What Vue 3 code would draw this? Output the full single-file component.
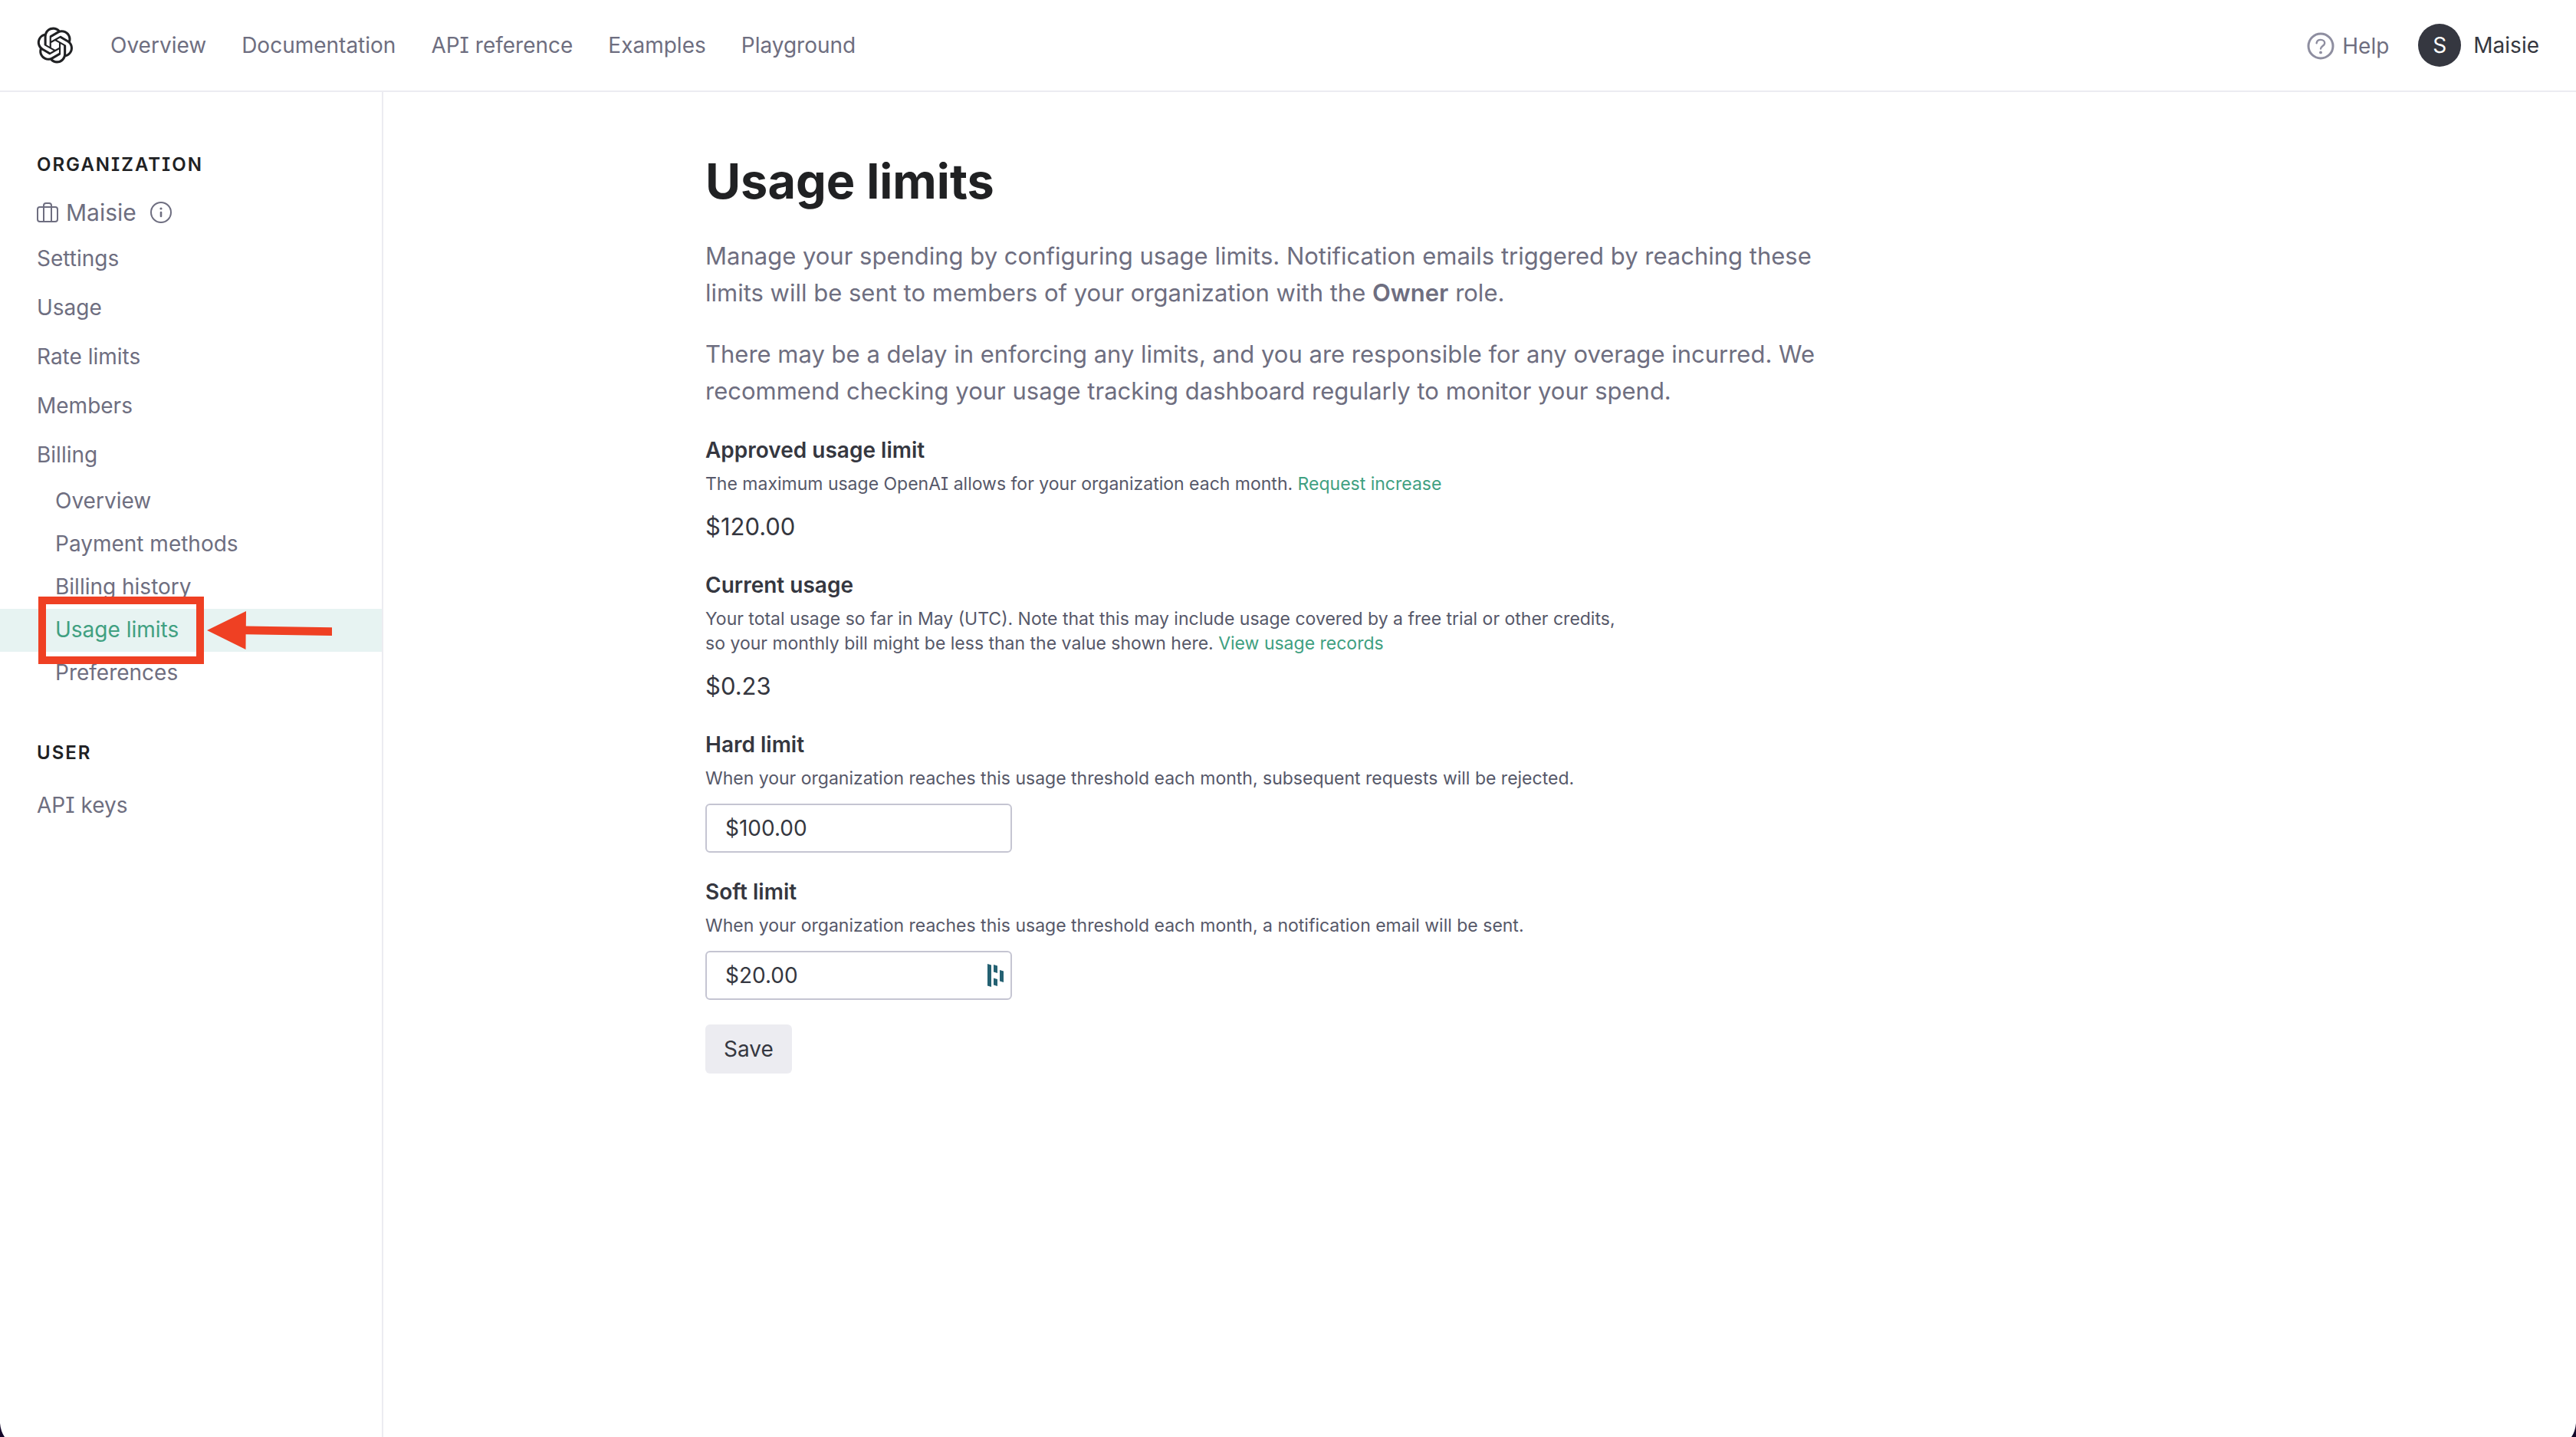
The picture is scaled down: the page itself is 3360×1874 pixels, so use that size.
<script setup>
import { ref } from 'vue'

const topLinks = ['Overview', 'Documentation', 'API reference', 'Examples', 'Playground']
const orgLinks = ['Settings', 'Usage', 'Rate limits', 'Members', 'Billing']
const billingLinks = ['Overview', 'Payment methods', 'Billing history', 'Usage limits', 'Preferences']
const activeLink = 'Usage limits'

const hardLimit = ref('$100.00')
const softLimit = ref('$20.00')
</script>

<template>
  <div class="page">
    <header class="topbar">
      <a class="logo" href="#" aria-label="OpenAI">
        <svg viewBox="0 0 41 41" width="48" height="48" fill="currentColor" aria-hidden="true">
          <path d="M37.5324 16.8707C37.9808 15.5241 38.1363 14.0974 37.9886 12.6859C37.8409 11.2744 37.3934 9.91076 36.676 8.68622C35.6126 6.83404 33.9882 5.3676 32.0373 4.4985C30.0864 3.62941 27.9098 3.40259 25.8215 3.85078C24.8796 2.7893 23.7219 1.94125 22.4257 1.36341C21.1295 0.785575 19.7249 0.491269 18.3058 0.500197C16.1708 0.495044 14.0893 1.16803 12.3614 2.42214C10.6335 3.67624 9.34853 5.44666 8.6917 7.47815C7.30085 7.76286 5.98686 8.3414 4.8377 9.17505C3.68854 10.0087 2.73073 11.0782 2.02839 12.312C0.956464 14.1591 0.498905 16.2988 0.721698 18.4228C0.944492 20.5467 1.83612 22.5449 3.268 24.1293C2.81966 25.4759 2.66413 26.9026 2.81182 28.3141C2.95951 29.7256 3.40701 31.0892 4.12437 32.3138C5.18791 34.1659 6.8123 35.6322 8.76321 36.5013C10.7141 37.3704 12.8907 37.5973 14.9789 37.1492C15.9208 38.2107 17.0786 39.0587 18.3747 39.6366C19.6709 40.2144 21.0755 40.5087 22.4946 40.4998C24.6307 40.5054 26.7133 39.8321 28.4418 38.5772C30.1704 37.3223 31.4556 35.5506 32.1119 33.5179C33.5027 33.2332 34.8167 32.6547 35.9659 31.821C37.115 30.9874 38.0728 29.9178 38.7752 28.684C39.8458 26.8371 40.3023 24.6979 40.0789 22.5748C39.8556 20.4517 38.9639 18.4544 37.5324 16.8707ZM22.4978 37.8849C20.7443 37.8874 19.0459 37.2733 17.6994 36.1501C17.7601 36.117 17.8666 36.0586 17.936 36.0161L25.9004 31.4156C26.1003 31.3019 26.2663 31.137 26.3813 30.9378C26.4964 30.7386 26.5563 30.5124 26.5549 30.2825V19.0542L29.9213 20.998C29.9389 21.0068 29.9541 21.0198 29.9656 21.0359C29.977 21.052 29.9842 21.0707 29.9867 21.0902V30.3889C29.9842 32.375 29.1946 34.2791 27.7909 35.6841C26.3872 37.0892 24.4838 37.8806 22.4978 37.8849ZM6.39227 31.0064C5.51397 29.4888 5.19742 27.7107 5.49804 25.9832C5.55718 26.0187 5.66048 26.0818 5.73461 26.1244L13.699 30.7248C13.8975 30.8408 14.1233 30.902 14.3532 30.902C14.583 30.902 14.8088 30.8408 15.0073 30.7248L24.731 25.1103V28.9979C24.7321 29.0177 24.7283 29.0376 24.7199 29.0556C24.7115 29.0736 24.6988 29.0893 24.6829 29.1012L16.6317 33.7497C14.9096 34.7416 12.8643 35.0097 10.9447 34.4954C9.02506 33.9811 7.38785 32.7263 6.39227 31.0064ZM4.29707 13.6194C5.17156 12.0998 6.55279 10.9364 8.19885 10.3327C8.19885 10.4013 8.19491 10.5228 8.19491 10.6071V19.808C8.19351 20.0378 8.25334 20.2638 8.36823 20.4629C8.48312 20.6619 8.64893 20.8267 8.84863 20.9404L18.5723 26.5542L15.206 28.4979C15.1894 28.5089 15.1703 28.5155 15.1505 28.5173C15.1307 28.5191 15.1107 28.516 15.0924 28.5082L7.04046 23.8557C5.32135 22.8601 4.06716 21.2235 3.55289 19.3046C3.03862 17.3858 3.30624 15.3413 4.29707 13.6194ZM31.955 20.0556L22.2312 14.4411L25.5976 12.4981C25.6142 12.4872 25.6333 12.4805 25.6531 12.4787C25.6729 12.4769 25.6928 12.4801 25.7111 12.4879L33.7631 17.1364C34.9967 17.849 36.0017 18.8982 36.6606 20.1613C37.3194 21.4244 37.6047 22.849 37.4832 24.2684C37.3617 25.6878 36.8382 27.0432 35.9743 28.1759C35.1103 29.3086 33.9415 30.1717 32.6047 30.6641C32.6047 30.5947 32.6047 30.4733 32.6047 30.3889V21.188C32.6066 20.9586 32.5474 20.7328 32.4332 20.5338C32.319 20.3348 32.154 20.1698 31.955 20.0556ZM35.3055 15.0128C35.2464 14.9765 35.1431 14.9142 35.069 14.8717L27.1045 10.2712C26.906 10.1554 26.6803 10.0943 26.4504 10.0943C26.2206 10.0943 25.9948 10.1554 25.7963 10.2712L16.0726 15.8858V11.9982C16.0715 11.9783 16.0753 11.9585 16.0837 11.9405C16.0921 11.9225 16.1048 11.9068 16.1207 11.8949L24.1719 7.25025C25.4053 6.53903 26.8158 6.19376 28.2383 6.25482C29.6608 6.31589 31.0364 6.78077 32.2044 7.59508C33.3723 8.40939 34.2842 9.53945 34.8334 10.8531C35.3826 12.1667 35.5464 13.6095 35.3055 15.0128ZM14.2424 21.9419L10.8752 19.9981C10.8576 19.9893 10.8423 19.9763 10.8309 19.9602C10.8195 19.9441 10.8122 19.9254 10.8098 19.9058V10.6071C10.8107 9.18295 11.2173 7.78848 11.9819 6.58696C12.7466 5.38544 13.8377 4.42659 15.1275 3.82264C16.4173 3.21869 17.8524 2.99464 19.2649 3.1767C20.6775 3.35876 22.0089 3.93941 23.1034 4.85067C23.0427 4.88379 22.937 4.94215 22.8668 4.98473L14.9024 9.58517C14.7025 9.69878 14.5366 9.86356 14.4215 10.0626C14.3065 10.2616 14.2466 10.4877 14.2479 10.7175L14.2424 21.9419ZM16.071 17.9991L20.4018 15.4978L24.7325 17.9975V22.9985L20.4018 25.4983L16.071 22.9985V17.9991Z" />
        </svg>
      </a>
      <nav class="topnav" aria-label="Main">
        <a v-for="link in topLinks" :key="link" href="#">{{ link }}</a>
      </nav>
      <div class="account">
        <a class="help" href="#">
          <svg class="help-icon" viewBox="0 0 36 36" width="36" height="36" fill="none" stroke="currentColor" stroke-width="3" stroke-linecap="round" aria-hidden="true">
            <circle cx="18" cy="18" r="16" />
            <path d="M12.6 14.2C13 11.600 15.200 9.900 18 9.900C21 9.900 23.200 11.700 23.200 14.300C23.200 17.900 18 18.200 18 21.600" stroke-width="2.400" />
            <circle cx="18" cy="26.400" r="1.900" fill="currentColor" stroke="none" />
          </svg>
          Help
        </a>
        <button class="profile" type="button">
          <span class="avatar">S</span>
          Maisie
        </button>
      </div>
    </header>

    <div class="body">
      <aside class="sidebar">
        <h2 class="side-title">ORGANIZATION</h2>
        <div class="org">
          <svg viewBox="0 0 28 26" width="28" height="26" fill="none" stroke="currentColor" stroke-width="2" stroke-linejoin="round" aria-hidden="true">
            <rect x="1" y="6" width="26" height="19" rx="3" />
            <path d="M9 25V4a3 3 0 0 1 3-3h4a3 3 0 0 1 3 3v21" />
          </svg>
          <span class="org-name">Maisie</span>
          <svg class="info" viewBox="0 0 28 28" width="28" height="28" fill="none" stroke="currentColor" stroke-width="2" aria-hidden="true">
            <circle cx="14" cy="14" r="13" />
            <path d="M14 14v5" stroke-width="2.600" stroke-linecap="round" />
            <circle cx="14" cy="9" r="1.600" fill="currentColor" stroke="none" />
          </svg>
        </div>
        <nav aria-label="Organization">
          <a v-for="link in orgLinks" :key="link" class="side-link" href="#">{{ link }}</a>
          <div class="sub-links">
            <a
              v-for="link in billingLinks"
              :key="link"
              class="sub-link"
              :class="{ active: link === activeLink }"
              href="#"
            >
              {{ link }}
              <template v-if="link === activeLink">
                <span class="callout-box"></span>
                <svg class="callout-arrow" viewBox="0 0 164 50" width="164" height="50" aria-hidden="true">
                  <path d="M0 25L51 0L50.800 19.500L163 21.300V32L50.600 30.300L50.500 50Z" fill="#ef4023" />
                </svg>
              </template>
            </a>
          </div>
        </nav>
        <h2 class="side-title user-title">USER</h2>
        <nav aria-label="User">
          <a class="side-link" href="#">API keys</a>
        </nav>
      </aside>

      <main class="main">
        <div class="content">
          <h1>Usage limits</h1>
          <div class="intro">
            <p>
              Manage your spending by configuring usage limits. Notification emails triggered by reaching these
              limits will be sent to members of your organization with the <strong>Owner</strong> role.
            </p>
            <p>
              There may be a delay in enforcing any limits, and you are responsible for any overage incurred. We
              recommend checking your usage tracking dashboard regularly to monitor your spend.
            </p>
          </div>

          <section class="stat">
            <h3 class="label">Approved usage limit</h3>
            <p class="hint">
              The maximum usage OpenAI allows for your organization each month.
              <a href="#">Request increase</a>
            </p>
            <p class="value">$120.00</p>
          </section>

          <section class="stat">
            <h3 class="label">Current usage</h3>
            <p class="hint">
              Your total usage so far in May (UTC). Note that this may include usage covered by a free trial or other credits,<br />
              so your monthly bill might be less than the value shown here.
              <a href="#">View usage records</a>
            </p>
            <p class="value">$0.23</p>
          </section>

          <form @submit.prevent>
            <div class="field">
              <label class="label" for="hard-limit">Hard limit</label>
              <p id="hard-hint" class="hint">
                When your organization reaches this usage threshold each month, subsequent requests will be rejected.
              </p>
              <div class="input-wrap">
                <input id="hard-limit" v-model="hardLimit" type="text" aria-describedby="hard-hint" />
              </div>
            </div>
            <div class="field">
              <label class="label" for="soft-limit">Soft limit</label>
              <p id="soft-hint" class="hint">
                When your organization reaches this usage threshold each month, a notification email will be sent.
              </p>
              <div class="input-wrap">
                <input id="soft-limit" v-model="softLimit" type="text" aria-describedby="soft-hint" />
                <svg class="autofill" viewBox="0 0 22 30" width="22" height="30" fill="#246172" aria-hidden="true">
                  <path d="M0 0L5 1.500V30L0 28.500ZM8 1L13 2.500V12L8 10.500ZM8 18.500L13 20V29L8 27.500ZM16 8L21 9.500V24L16 22.500Z" />
                </svg>
              </div>
            </div>
            <button class="save" type="submit">Save</button>
          </form>
        </div>
      </main>
    </div>

    <svg class="corner left" viewBox="0 0 6 18" width="6" height="18" aria-hidden="true">
      <path d="M0 0Q1 11 6 18H0Z" fill="#14082a" />
    </svg>
    <svg class="corner right" viewBox="0 0 6 18" width="6" height="18" aria-hidden="true">
      <path d="M6 0Q5 11 0 18H6Z" fill="#14082a" />
    </svg>
  </div>
</template>

<style>
body {
  margin: 0;
  background: #fff;
}
</style>

<style scoped>
/* cv08 gives Inter's capital I its serifs */
.page {
  display: flex;
  flex-direction: column;
  min-height: 100vh;
  font-family: Inter, "Liberation Sans", sans-serif;
  font-feature-settings: "cv08";
  font-size: 28px;
  color: #353740;
}

a {
  color: inherit;
  text-decoration: none;
}

h1,
h2,
h3,
p {
  margin: 0;
}

input,
button {
  box-sizing: border-box;
  margin: 0;
  font: inherit;
  color: inherit;
}

.topbar {
  display: flex;
  align-items: center;
  box-sizing: border-box;
  height: 120px;
  padding: 0 48px;
  border-bottom: 2px solid #ececf1;
}

.logo {
  display: flex;
  color: #202123;
}

.topnav {
  display: flex;
  gap: 46px;
  margin-left: 48px;
  color: #6e6e80;
}

.account {
  display: flex;
  align-items: center;
  gap: 38px;
  margin-left: auto;
}

.help {
  display: flex;
  align-items: center;
  gap: 10px;
  padding-top: 2px;
  color: #6e6e80;
}

.help-icon {
  color: #8e8ea0;
}

.profile {
  display: flex;
  align-items: center;
  gap: 16px;
  padding: 0;
  border: 0;
  background: none;
}

.avatar {
  width: 56px;
  border-radius: 50%;
  background: #353740;
  color: #fff;
  line-height: 56px;
  text-align: center;
}

.body {
  display: flex;
  flex: 1;
}

.sidebar {
  box-sizing: border-box;
  flex: none;
  width: 500px;
  padding-top: 81px;
  border-right: 2px solid #ececf1;
  color: #6e6e80;
}

.side-title {
  margin-bottom: 22px;
  padding-left: 48px;
  color: #202123;
  font-size: 24px;
  font-weight: 600;
  line-height: 28px;
  letter-spacing: 2px;
}

.user-title {
  margin-top: 62px;
}

.org {
  display: flex;
  align-items: center;
  height: 52px;
  margin-bottom: 2px;
  padding-left: 48px;
}

.org-name {
  margin: 0 18px 0 10px;
  font-size: 30px;
}

.side-link {
  display: block;
  padding-left: 48px;
  line-height: 64px;
}

.sub-links {
  padding-top: 1px;
}

.sub-link {
  display: block;
  position: relative;
  padding: 0 0 2px 72px;
  line-height: 54px;
}

.active {
  z-index: 1;
  background: #e7f3f2;
  color: #40a081;
}

.callout-box {
  position: absolute;
  top: -16px;
  left: 50px;
  box-sizing: border-box;
  width: 216px;
  height: 88px;
  border: 10px solid #ef4023;
}

.callout-arrow {
  position: absolute;
  top: 3px;
  left: 270px;
}

.main {
  flex: 1;
  padding: 80px 64px;
}

.content {
  max-width: 2020px;
  margin: 0 auto;
}

h1 {
  margin-bottom: 38px;
  color: #202123;
  font-size: 63px;
  font-weight: 700;
  line-height: 72px;
}

.intro {
  display: flex;
  flex-direction: column;
  gap: 32px;
  max-width: 1480px;
  margin-bottom: 37px;
  color: #6e6e80;
  font-size: 31px;
  line-height: 48px;
}

strong {
  font-weight: 600;
}

.stat {
  margin-bottom: 40px;
}

.label {
  display: block;
  font-size: 28px;
  font-weight: 600;
  line-height: 32px;
}

.hint {
  margin-top: 12px;
  color: #565869;
  font-size: 23px;
  line-height: 32px;
}

.hint a {
  color: #40a081;
}

.value {
  margin-top: 20px;
  font-size: 31px;
  line-height: 40px;
}

.field + .field {
  margin-top: 35px;
}

.input-wrap {
  position: relative;
  width: 400px;
  margin-top: 17px;
}

input {
  display: block;
  width: 100%;
  height: 64px;
  padding: 0 24px;
  border: 2px solid #c5c5d2;
  border-radius: 6px;
  background: #fff;
}

.autofill {
  position: absolute;
  top: 17px;
  right: 10px;
}

.save {
  height: 64px;
  margin-top: 32px;
  padding: 0 24px;
  border: 0;
  border-radius: 6px;
  background: #ececf1;
}

.corner {
  position: fixed;
  bottom: 0;
}

.left {
  left: 0;
}

.right {
  right: 0;
}
</style>
